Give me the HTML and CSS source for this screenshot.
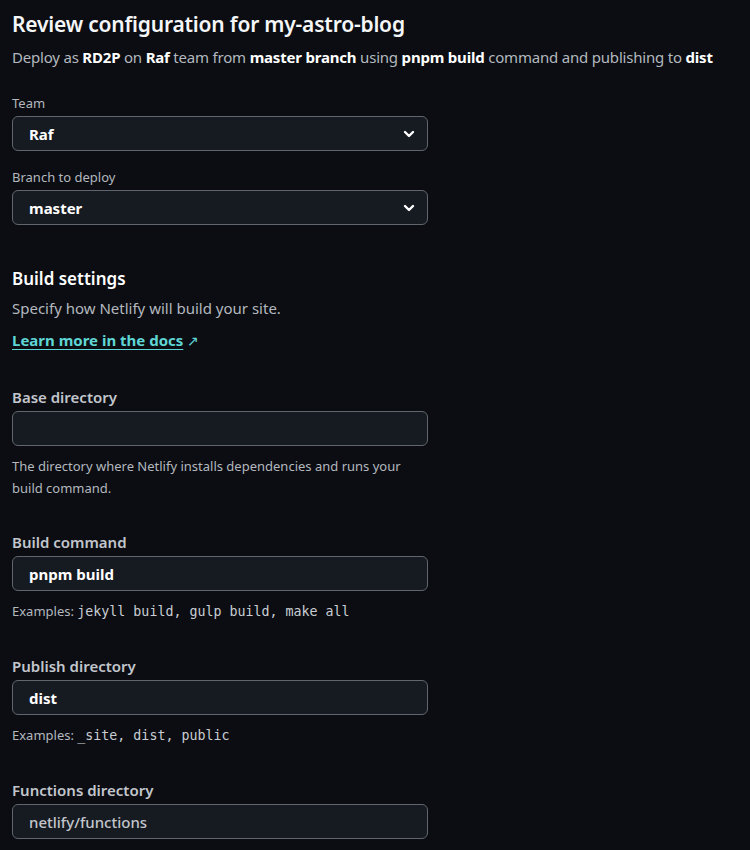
FILE: index.html
```html
<!DOCTYPE html>
<html lang="en">
<head>
<meta charset="utf-8">
<title>Review configuration</title>
<link rel="stylesheet" href="styles.css">
</head>
<body>
<main class="page">
  <h1 class="title">Review configuration for my-astro-blog</h1>
  <p class="summary">Deploy as <strong>RD2P</strong> on <strong>Raf</strong> team from <strong>master branch</strong> using <strong>pnpm build</strong> command and publishing to <strong>dist</strong></p>

  <div class="selects">
    <div class="field small">
      <label class="label-sm">Team</label>
      <div class="select"><span>Raf</span>
        <svg class="chev" width="12" height="12" viewBox="0 0 12 12"><path d="M2 4 L6 8 L10 4" fill="none" stroke="#fff" stroke-width="2.4" stroke-linecap="round" stroke-linejoin="round"/></svg>
      </div>
    </div>
    <div class="field small">
      <label class="label-sm">Branch to deploy</label>
      <div class="select"><span>master</span>
        <svg class="chev" width="12" height="12" viewBox="0 0 12 12"><path d="M2 4 L6 8 L10 4" fill="none" stroke="#fff" stroke-width="2.4" stroke-linecap="round" stroke-linejoin="round"/></svg>
      </div>
    </div>
  </div>

  <section class="build">
    <h2 class="subtitle">Build settings</h2>
    <p class="desc">Specify how Netlify will build your site.</p>
    <p class="doclink"><a href="#">Learn more in the docs</a> <span class="arrow">↗</span></p>

    <div class="fields">
      <div class="field big">
        <label class="label">Base directory</label>
        <div class="input"></div>
        <p class="help">The directory where Netlify installs dependencies and runs your build command.</p>
      </div>
      <div class="field big">
        <label class="label">Build command</label>
        <div class="input"><span>pnpm build</span></div>
        <p class="help">Examples: <code>jekyll build, gulp build, make all</code></p>
      </div>
      <div class="field big">
        <label class="label">Publish directory</label>
        <div class="input"><span>dist</span></div>
        <p class="help">Examples: <code>_site, dist, public</code></p>
      </div>
      <div class="field big">
        <label class="label">Functions directory</label>
        <div class="input placeholder"><span>netlify/functions</span></div>
      </div>
    </div>
  </section>
</main>
</body>
</html>
```
FILE: styles.css
```css
html, body {
  margin: 0;
  padding: 0;
  background: #0b0d12;
  color: #e6e8eb;
  font-family: "Noto Sans", "Open Sans", sans-serif;
}
.page {
  padding: 8px 12px 0 12px;
  width: 726px;
}
.title {
  margin: 0;
  font-size: 21px;
  font-weight: 600;
  line-height: 32px;
  color: #f5f6f7;
  letter-spacing: -0.2px;
}
.summary {
  margin: 4px 0 0 0;
  font-size: 15px;
  line-height: 26px;
  color: #b3b8bf;
  letter-spacing: -0.2px;
}
.summary strong {
  color: #ffffff;
  font-weight: 700;
}
.selects {
  margin-top: 23px;
  display: flex;
  flex-direction: column;
  gap: 16px;
}
.label-sm {
  display: block;
  font-size: 13px;
  line-height: 20px;
  color: #b3b8bf;
  margin-bottom: 3px;
}
.select, .input {
  width: 416px;
  box-sizing: border-box;
  height: 35px;
  border: 1px solid #61666e;
  border-radius: 6px;
  background: #161a21;
  display: flex;
  align-items: center;
  justify-content: space-between;
  padding: 0 12px 0 16px;
  font-size: 15px;
  font-weight: 700;
  color: #ffffff;
}
.chev {
  flex: none;
}
.build {
  margin-top: 41px;
}
.subtitle {
  margin: 0;
  font-size: 17px;
  line-height: 26px;
  font-weight: 600;
  color: #ffffff;
}
.desc {
  margin: 4px 0 0 0;
  font-size: 15px;
  line-height: 24px;
  color: #b3b8bf;
}
.doclink {
  margin: 8px 0 0 0;
  font-size: 15px;
  line-height: 24px;
}
.doclink a {
  color: #5fd6d5;
  font-weight: 700;
  text-decoration: underline;
  text-underline-offset: 3px;
}
.arrow {
  color: #5fd6d5;
  font-size: 14px;
}
.fields {
  margin-top: 33px;
  display: flex;
  flex-direction: column;
  gap: 32px;
}
.label {
  display: block;
  font-size: 15px;
  font-weight: 600;
  line-height: 22px;
  color: #c2c6cc;
  margin-bottom: 3px;
}
.help {
  margin: 9px 0 0 0;
  width: 416px;
  font-size: 13px;
  line-height: 22px;
  color: #b3b8bf;
}
.help code {
  font-family: "DejaVu Sans Mono", "Liberation Mono", monospace;
  font-size: 13.3px;
  color: #c9cdd2;
}
.input.placeholder {
  font-weight: 500;
  color: #c2c6cc;
}
```
